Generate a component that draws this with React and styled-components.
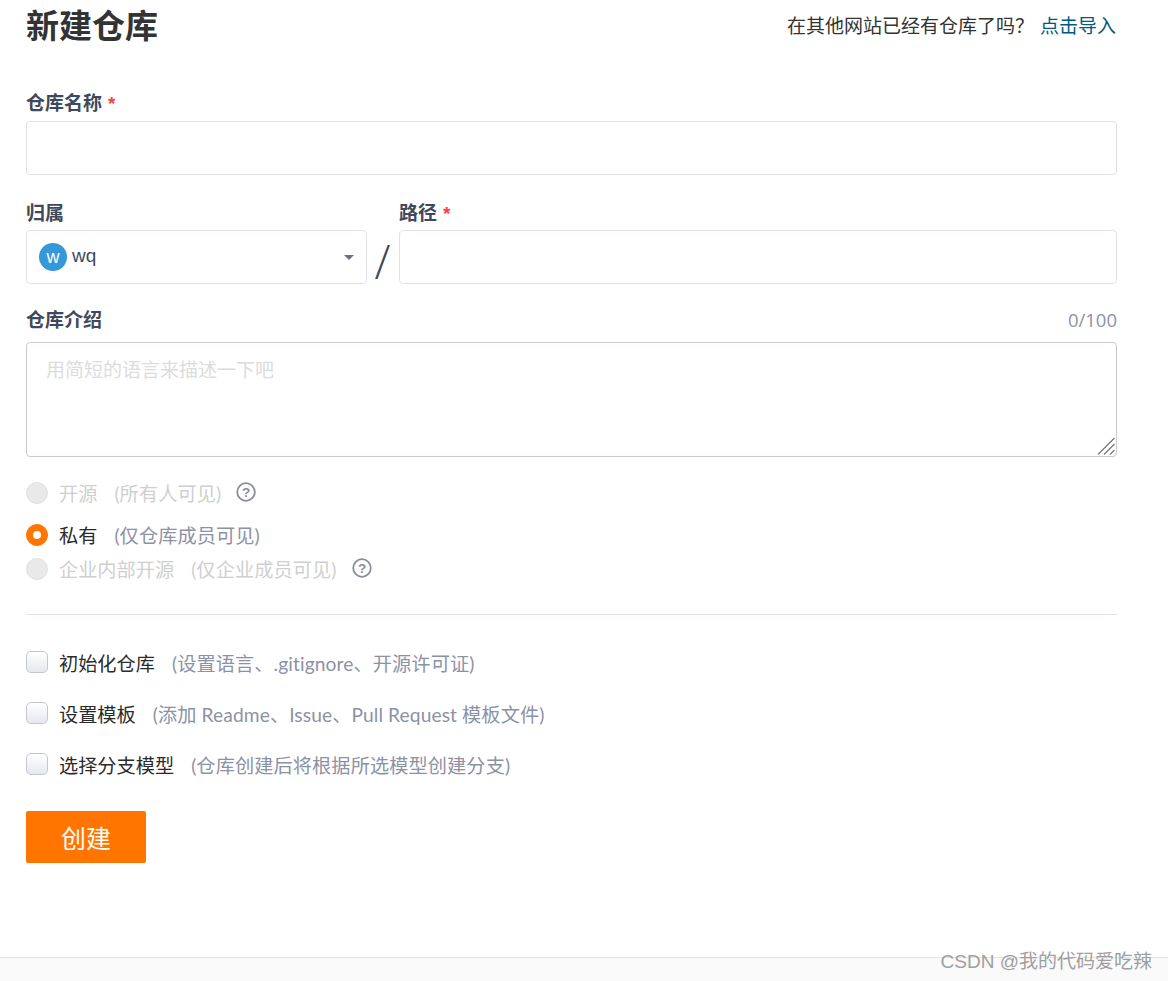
import React from "react";
import styled, { createGlobalStyle } from "styled-components";

const Global = createGlobalStyle`
  html, body { margin: 0; padding: 0; background: #fff; }
  body { font-family: "Liberation Sans", "Noto Sans CJK SC", sans-serif; overflow: hidden; }
  * { box-sizing: border-box; }
`;
const Page = styled.div`
  height: 981px;
  display: flex;
  flex-direction: column;
  position: relative;
`;
const Form = styled.form`
  width: 1117px;
  padding-left: 26px;
  display: flex;
  flex-direction: column;
`;
const Header = styled.div`
  height: 54px;
  display: flex;
  align-items: center;
  justify-content: space-between;
  margin-bottom: 39px;
`;
const Title = styled.h1`
  margin: 0;
  font-size: 33px;
  font-weight: 700;
  color: #333;
  line-height: 54px;
`;
const ImportHint = styled.div`
  font-size: 19px;
  color: #333;
  display: flex;
  gap: 3px;
  line-height: 24px;
  padding-right: 1px;
`;
const Link = styled.a`
  color: #005980;
  margin-left: 3px;
`;
const Label = styled.label`
  display: block;
  height: 20px;
  line-height: 22px;
  font-size: 19px;
  font-weight: 700;
  color: #40485b;
`;
const Req = styled.span`
  color: #f2453d;
  margin-left: 6px;
`;
const Input = styled.input`
  display: block;
  width: 100%;
  height: 54px;
  border: 1px solid #dfe3e9;
  border-radius: 4px;
  background: #fff;
  outline: none;
`;
const NameInput = styled(Input)`
  margin-top: 8px;
`;
const OwnerRow = styled.div`
  display: flex;
  margin-top: 28px;
`;
const OwnerCol = styled.div`
  width: 341px;
  flex: none;
`;
const Slash = styled.div`
  width: 32px;
  flex: none;
  align-self: flex-end;
  height: 54px;
  display: flex;
  align-items: center;
  justify-content: center;
  padding: 7px 1px 0 0;
  font-family: "Open Sans", sans-serif;
  font-size: 47px;
  font-weight: 300;
  color: #40485b;
  line-height: 54px;
`;
const PathCol = styled.div`
  flex: 1;
`;
const FieldBox = styled.div`
  margin-top: 7px;
`;
const Select = styled.div`
  height: 54px;
  border: 1px solid #dfe3e9;
  border-radius: 4px;
  display: flex;
  align-items: center;
  padding: 0 12px;
  gap: 5px;
  color: #40485b;
  font-size: 19px;
`;
const Avatar = styled.span`
  width: 28px;
  height: 28px;
  border-radius: 50%;
  background: #3498db;
  color: #fff;
  font-size: 18px;
  display: flex;
  align-items: center;
  justify-content: center;
`;
const Owner = styled.span`
  flex: 1;
  margin-top: -2px;
`;
const Caret = styled.span`
  width: 0;
  height: 0;
  border-left: 5px solid transparent;
  border-right: 5px solid transparent;
  border-top: 5px solid #6a7080;
`;
const DescHead = styled.div`
  display: flex;
  height: 20px;
  justify-content: space-between;
  align-items: center;
  margin-top: 26px;
`;
const Count = styled.span`
  font-family: "Open Sans", sans-serif;
  font-size: 18.5px;
  color: #8c92a4;
  line-height: 20px;
`;
const AreaWrap = styled.div`
  position: relative;
  margin-top: 12px;
`;
const TextArea = styled.textarea`
  display: block;
  width: 100%;
  height: 115px;
  padding: 15px 19px;
  border: 1px solid #c9c8d8;
  border-radius: 4px;
  outline: none;
  resize: none;
  font: 19px/26px "Liberation Sans", "Noto Sans CJK SC", sans-serif;
  &::placeholder { color: #dcdcdc; opacity: 1; }
`;
const Grip = styled.svg`
  position: absolute;
  right: 2px;
  bottom: 2px;
  width: 18px;
  height: 18px;
`;
const Option = styled.div`
  display: flex;
  align-items: center;
  height: 24px;
  margin-top: ${p => p.$top}px;
  font-size: 19.2px;
  white-space: pre;
`;
const Radio = styled.span`
  width: 22px;
  height: 22px;
  flex: none;
  border-radius: 50%;
  margin: 0 11px 0 0;
  display: flex;
  align-items: center;
  justify-content: center;
  background: ${p => (p.$checked ? "#ff7500" : "#e9e9e9")};
  border: 1px solid ${p => (p.$checked ? "#ff7500" : "#e0e0e0")};
  &::after {
    content: "";
    display: ${p => (p.$checked ? "block" : "none")};
    width: 8px;
    height: 8px;
    border-radius: 50%;
    background: #fff;
  }
`;
const Name = styled.span`
  color: ${p => (p.$disabled ? "#cfcfcf" : "#2b2b2b")};
  margin-right: 15px;
`;
const Note = styled.span`
  font-family: "Lato", "Noto Sans CJK SC", sans-serif;
  padding: 0 2px;
  letter-spacing: 0.1px;
  color: ${p => (p.$disabled ? "#cfcfcf" : "#8c92a4")};
`;
const Help = styled.svg`
  width: 20px;
  height: 20px;
  margin-left: 13px;
  margin-top: -3px;
  flex: none;
`;
const Divider = styled.hr`
  width: 100%;
  height: 1px;
  margin: 33px 0 0;
  border: 0;
  background: #dfe3e9;
`;
const Check = styled.span`
  width: 22px;
  height: 22px;
  flex: none;
  margin: -2px 11px 0 0;
  border: 1px solid #c4c7d2;
  border-radius: 5px;
  background: linear-gradient(#ffffff, #e6e8ee);
`;
const Submit = styled.button`
  width: 120px;
  height: 52px;
  margin-top: 34px;
  border: 0;
  border-radius: 2px;
  background: #ff7500;
  color: #fff;
  font: 25px "Liberation Sans", "Noto Sans CJK SC", sans-serif;
  padding: 0;
`;
const Footer = styled.footer`
  margin-top: auto;
  height: 24px;
  background: #fafafa;
  border-top: 1px solid #e4e4e4;
`;
const Watermark = styled.div`
  position: absolute;
  right: 16px;
  bottom: 6px;
  font-size: 19px;
  line-height: 26px;
  color: #9f9f9f;
`;

const HelpIcon = () => (
  <Help viewBox="0 0 20 20" fill="none">
    <circle cx="10" cy="10" r="8.8" stroke="#8c8c9c" strokeWidth="1.8" />
    <text x="10" y="14.8" textAnchor="middle" fontSize="13.5" fontWeight="700" fill="#8c8c9c" fontFamily="Liberation Sans">?</text>
  </Help>
);

export default function App() {
  return (
    <Page>
      <Global />
      <Form>
        <Header>
          <Title>新建仓库</Title>
          <ImportHint>
            <span>在其他网站已经有仓库了吗？</span>
            <Link>点击导入</Link>
          </ImportHint>
        </Header>
        <Label>仓库名称<Req>*</Req></Label>
        <NameInput />
        <OwnerRow>
          <OwnerCol>
            <Label>归属</Label>
            <FieldBox>
              <Select>
                <Avatar>w</Avatar>
                <Owner>wq</Owner>
                <Caret />
              </Select>
            </FieldBox>
          </OwnerCol>
          <Slash>/</Slash>
          <PathCol>
            <Label>路径<Req>*</Req></Label>
            <FieldBox><Input /></FieldBox>
          </PathCol>
        </OwnerRow>
        <DescHead>
          <Label>仓库介绍</Label>
          <Count>0/100</Count>
        </DescHead>
        <AreaWrap>
          <TextArea placeholder="用简短的语言来描述一下吧" />
          <Grip viewBox="0 0 18 18" stroke="#777" strokeWidth="1.3">
            <line x1="1" y1="17.5" x2="17.5" y2="1" />
            <line x1="7" y1="17.5" x2="17.5" y2="7" />
            <line x1="13" y1="17.5" x2="17.5" y2="13" />
          </Grip>
        </AreaWrap>
        <Option $top={24}>
          <Radio />
          <Name $disabled>开源</Name>
          <Note $disabled>(所有人可见)</Note>
          <HelpIcon />
        </Option>
        <Option $top={18}>
          <Radio $checked />
          <Name>私有</Name>
          <Note>(仅仓库成员可见)</Note>
        </Option>
        <Option $top={10}>
          <Radio />
          <Name $disabled>企业内部开源</Name>
          <Note $disabled>(仅企业成员可见)</Note>
          <HelpIcon />
        </Option>
        <Divider />
        <Option $top={36}>
          <Check />
          <Name>初始化仓库</Name>
          <Note>(设置语言、.gitignore、开源许可证)</Note>
        </Option>
        <Option $top={27}>
          <Check />
          <Name>设置模板</Name>
          <Note>(添加 Readme、Issue、Pull Request 模板文件)</Note>
        </Option>
        <Option $top={27}>
          <Check />
          <Name>选择分支模型</Name>
          <Note>(仓库创建后将根据所选模型创建分支)</Note>
        </Option>
        <Submit type="button">创建</Submit>
      </Form>
      <Footer />
      <Watermark>CSDN @我的代码爱吃辣</Watermark>
    </Page>
  );
}
